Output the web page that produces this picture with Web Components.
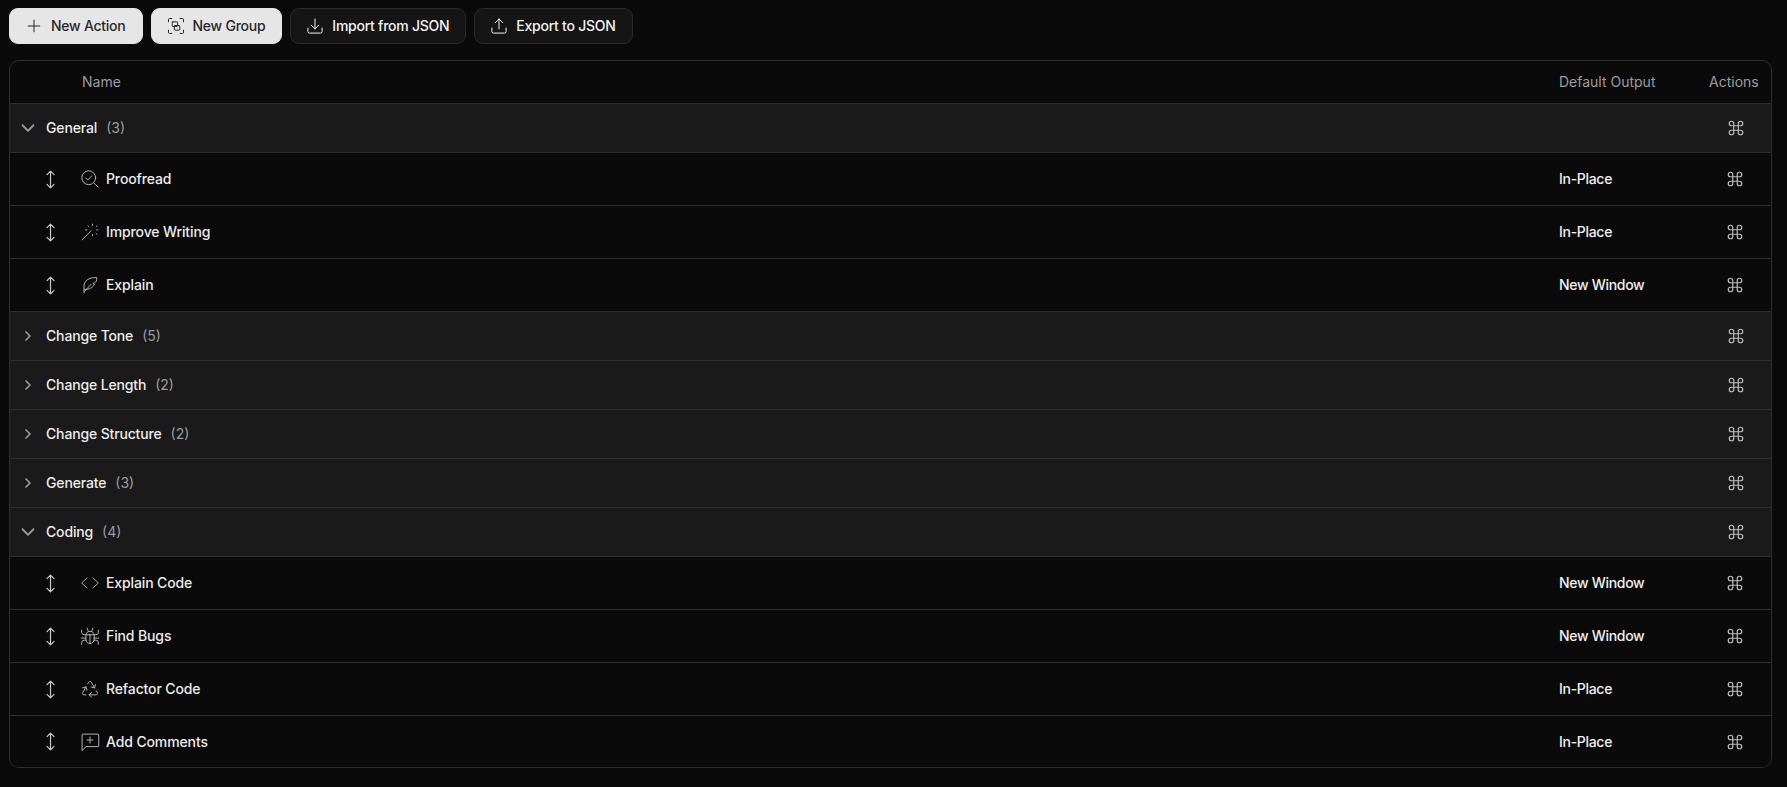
<!DOCTYPE html>
<html>
<head>
<meta charset="utf-8">
<title>Actions</title>
<style>
  html, body { margin: 0; background: #0a0a0a; }
  body { font-family: Inter, "Noto Sans", sans-serif; font-size: 14px; color: #ececec; }
</style>
</head>
<body>
<actions-page>
  <actions-toolbar>
    <tool-button kind="primary"><app-icon name="plus" size="20" slot="icon"></app-icon>New Action</tool-button>
    <tool-button kind="primary"><app-icon name="group" size="20" slot="icon"></app-icon>New Group</tool-button>
    <tool-button><app-icon name="download" size="20" slot="icon"></app-icon>Import from JSON</tool-button>
    <tool-button><app-icon name="upload" size="20" slot="icon"></app-icon>Export to JSON</tool-button>
  </actions-toolbar>
  <actions-table>
    <group-row open count="3">General</group-row>
    <action-row output="In-Place"><app-icon name="proofread" size="20" slot="icon"></app-icon>Proofread</action-row>
    <action-row output="In-Place"><app-icon name="wand" size="20" slot="icon"></app-icon>Improve Writing</action-row>
    <action-row output="New Window"><app-icon name="feather" size="20" slot="icon"></app-icon>Explain</action-row>
    <group-row count="5">Change Tone</group-row>
    <group-row count="2">Change Length</group-row>
    <group-row count="2">Change Structure</group-row>
    <group-row count="3">Generate</group-row>
    <group-row open count="4">Coding</group-row>
    <action-row output="New Window"><app-icon name="code" size="20" slot="icon"></app-icon>Explain Code</action-row>
    <action-row output="New Window"><app-icon name="bug" size="20" slot="icon"></app-icon>Find Bugs</action-row>
    <action-row output="In-Place"><app-icon name="recycle" size="20" slot="icon"></app-icon>Refactor Code</action-row>
    <action-row last output="In-Place"><app-icon name="comment" size="20" slot="icon"></app-icon>Add Comments</action-row>
  </actions-table>
</actions-page>

<script>
const ICONS = {
  plus: '<path d="M12 5v14M5 12h14"/>',
  group: '<path d="M3 7V4.500A1.500 1.500 0 0 1 4.500 3H7M17 3h2.500A1.500 1.500 0 0 1 21 4.500V7M21 17v2.500a1.500 1.500 0 0 1-1.500 1.500H17M7 21H4.500A1.500 1.500 0 0 1 3 19.500V17"/><rect x="7.500" y="7" width="6.500" height="5.500" rx=".8"/><rect x="10" y="11.500" width="6.500" height="5.500" rx=".8"/>',
  download: '<path d="M12 3.500v12M7.500 11l4.500 4.500 4.500-4.500M3.500 14.500v4A2 2 0 0 0 5.500 20.500h13a2 2 0 0 0 2-2v-4"/>',
  upload: '<path d="M12 15.500v-12M7.500 8 12 3.500 16.500 8M3.500 14.500v4A2 2 0 0 0 5.500 20.500h13a2 2 0 0 0 2-2v-4"/>',
  proofread: '<circle cx="10.500" cy="10.500" r="8.300"/><path d="m16.700 16.700 5 5M7 10.700l2.500 2.500 4.800-5"/>',
  wand: '<path d="M2.500 21.500 13.500 10.500"/><path stroke-dasharray="1.500 2.200" d="M15 2.500v2M9.500 4.500l1.300 1.300M20.500 4.500l-1.300 1.300M6.800 9.500h2M21.500 9.500h-2M20.500 15l-1.300-1.300M15 16.500v-2"/>',
  feather: '<path d="M4.800 21.500V13C5 7 10 3 20 3c.3 3.500-.5 5.500-3 6.700l-1.500.5 1.800.7C15.500 15 11.500 17.500 5 17.500"/><path d="M5 20 13.500 11"/>',
  code: '<path d="M8.500 6 2 12l6.500 6M15.500 6 22 12l-6.500 6"/>',
  bug: '<path d="M7 11c0-3 2.200-4.500 5-4.500s5 1.500 5 4.500v5c0 3-2.200 5-5 5s-5-2-5-5z"/><path d="M12 10v11M7 10.500h10M8.500 2.500 10 6.500M15.500 2.500 14 6.500M2 5v2.500a3 3 0 0 0 3 3h2M22 5v2.500a3 3 0 0 1-3 3h-2M1.500 14.500H7M22.500 14.500H17M2 22v-2a3 3 0 0 1 3-3h2.500M22 22v-2a3 3 0 0 0-3-3h-2.500"/>',
  recycle: '<path d="M7 19H4.815a1.830 1.830 0 0 1-1.570-.881 1.785 1.785 0 0 1-.004-1.784L7.196 9.500"/><path d="M11 19h8.203a1.830 1.830 0 0 0 1.556-.890 1.784 1.784 0 0 0 0-1.775l-1.226-2.120"/><path d="m14 16-3 3 3 3"/><path d="M8.293 13.596 7.196 9.500 3.100 10.598"/><path d="m9.344 5.811 1.093-1.892A1.830 1.830 0 0 1 11.985 3a1.784 1.784 0 0 1 1.546.888l3.943 6.843"/><path d="m13.378 9.633 4.096 1.098 1.097-4.096"/>',
  comment: '<path d="M2.500 22V3.500a1 1 0 0 1 1-1h18a1 1 0 0 1 1 1v13a1 1 0 0 1-1 1H7.500z"/><path d="M12 6v7.200M8.400 9.600h7.200"/>',
  sort: '<path d="M12 3v18M8 6.500 12 2.500l4 4M8 17.500l4 4 4-4"/>',
  down: '<path d="m6 9 6 6 6-6"/>',
  right: '<path d="m9 6 6 6-6 6"/>',
  command: '<path d="M15 6v12a3 3 0 1 0 3-3H6a3 3 0 1 0 3 3V6a3 3 0 1 0-3 3h12a3 3 0 1 0-3-3"/>'
}

class AppIcon extends HTMLElement {
  constructor() {
    super()
    const size = this.getAttribute('size') || 18
    const weight = this.getAttribute('weight') || 1.2
    this.attachShadow({ mode: 'open' }).innerHTML = `
      <style>
        :host { display: inline-flex; flex: none; width: ${size}px; height: ${size}px; }
        svg { width: 100%; height: 100%; fill: none; stroke: currentColor; stroke-width: ${weight}; stroke-linecap: round; stroke-linejoin: round; }
      </style>
      <svg viewBox="0 0 24 24">${ICONS[this.getAttribute('name')] || ''}</svg>`
  }
}

class ActionsPage extends HTMLElement {
  constructor() {
    super()
    this.attachShadow({ mode: 'open' }).innerHTML = `
      <style>
        :host { display: flex; flex-direction: column; gap: 16px; padding: 8px 15px 0 9px; }
      </style>
      <slot></slot>`
  }
}

class ActionsToolbar extends HTMLElement {
  constructor() {
    super()
    this.attachShadow({ mode: 'open' }).innerHTML = `
      <style>
        :host { display: flex; gap: 8px; }
      </style>
      <slot></slot>`
  }
}

class ToolButton extends HTMLElement {
  constructor() {
    super()
    this.attachShadow({ mode: 'open' }).innerHTML = `
      <style>
        :host { display: inline-flex; align-items: center; gap: 7px; box-sizing: border-box; height: 36px; padding: 0 16px 0 14px; border-radius: 9px; font-weight: 500; font-size: 14px; letter-spacing: -0.25px; white-space: nowrap; background: #151515; border: 1px solid #2a2a2a; color: #f2f2f2; }
        :host([kind="primary"]) { background: #e6e6e6; border-color: #e6e6e6; color: #26282c; }
        .text { padding-bottom: 2px; }
      </style>
      <slot name="icon"></slot><span class="text"><slot></slot></span>`
  }
}

class ActionsTable extends HTMLElement {
  constructor() {
    super()
    this.attachShadow({ mode: 'open' }).innerHTML = `
      <style>
        :host { display: block; border: 1px solid #2e2e2e; border-radius: 10px; overflow: hidden; background: #0a0a0a; }
        header { display: flex; align-items: center; height: 42px; padding-left: 72px; padding-bottom: 0; border-bottom: 1px solid #2e2e2e; color: #9c9ca0; font-size: 14px; }
        span { padding-bottom: 2px; }
        .name { flex: 1; }
        .output { width: 150px; }
        .actions { width: 62px; }
      </style>
      <header><span class="name">Name</span><span class="output">Default Output</span><span class="actions">Actions</span></header>
      <slot></slot>`
  }
}

class GroupRow extends HTMLElement {
  constructor() {
    super()
    const open = this.hasAttribute('open')
    this.attachShadow({ mode: 'open' }).innerHTML = `
      <style>
        :host { display: flex; align-items: center; box-sizing: border-box; height: 49px; padding-left: 7px; background: #1a1a1a; border-bottom: 1px solid #2e2e2e; }
        .chev { color: #999; display: inline-flex; justify-content: center; width: 22px; margin-right: 7px; }
        .label { font-weight: 500; letter-spacing: -0.15px; color: #ececec; padding-bottom: 2px; }
        .count { margin-left: 9px; color: #9c9ca0; padding-bottom: 2px; }
        .spacer { flex: 1; }
        .cmd { display: inline-flex; color: #bcbcbc; margin-right: 26px; }
      </style>
      <span class="chev"><app-icon name="${open ? 'down' : 'right'}" size="${open ? 22 : 16}" weight="${open ? 2 : 2.6}"></app-icon></span>
      <span class="label"><slot></slot></span>
      <span class="count">(${this.getAttribute('count')})</span>
      <span class="spacer"></span>
      <span class="cmd"><app-icon name="command" size="18" weight="1.600"></app-icon></span>`
  }
}

class ActionRow extends HTMLElement {
  constructor() {
    super()
    this.attachShadow({ mode: 'open' }).innerHTML = `
      <style>
        :host { display: flex; align-items: center; box-sizing: border-box; height: 53px; padding-left: 30px; background: #0a0a0a; border-bottom: 1px solid #2e2e2e; }
        :host([last]) { border-bottom: 0; height: 51px; }
        .grip { display: inline-flex; color: #c8c8c8; margin-right: 19px; }
        .icon { display: inline-flex; color: #b0b0b0; margin-right: 6px; }
        .label { flex: 1; font-weight: 500; letter-spacing: -0.12px; color: #ececec; padding-bottom: 2px; }
        .output { width: 150px; font-weight: 500; letter-spacing: -0.3px; color: #f0f0f0; padding-bottom: 2px; }
        :host([last]) .label, :host([last]) .output { padding-bottom: 0; }
        .cmd { display: inline-flex; color: #bcbcbc; width: 62px; }
        .cmd app-icon { margin-left: 17px; }
      </style>
      <span class="grip"><app-icon name="sort" size="21" weight="1.400"></app-icon></span>
      <span class="icon"><slot name="icon"></slot></span>
      <span class="label"><slot></slot></span>
      <span class="output">${this.getAttribute('output')}</span>
      <span class="cmd"><app-icon name="command" size="18" weight="1.600"></app-icon></span>`
  }
}

customElements.define('app-icon', AppIcon)
customElements.define('actions-page', ActionsPage)
customElements.define('actions-toolbar', ActionsToolbar)
customElements.define('tool-button', ToolButton)
customElements.define('actions-table', ActionsTable)
customElements.define('group-row', GroupRow)
customElements.define('action-row', ActionRow)
</script>
</body>
</html>
